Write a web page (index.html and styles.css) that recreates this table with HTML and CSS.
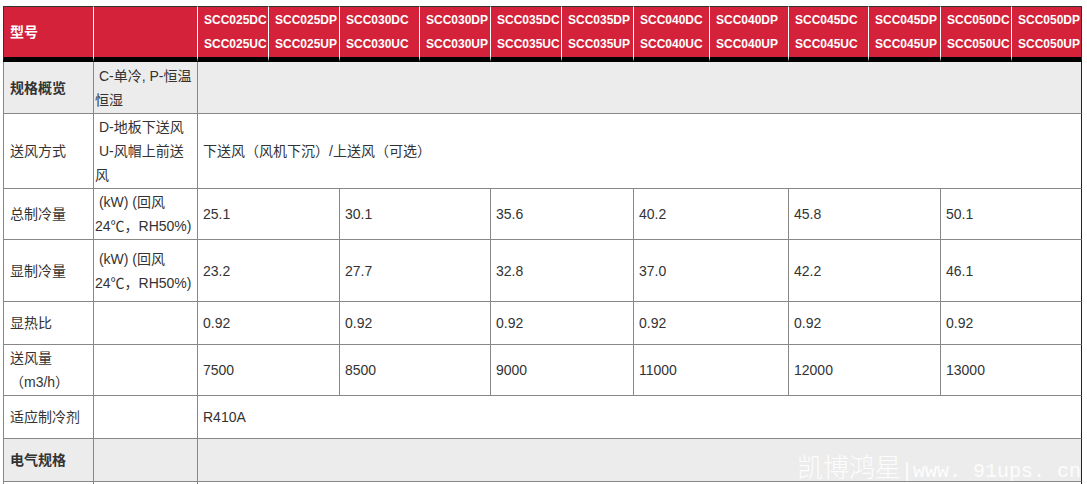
FILE: index.html
```html
<!DOCTYPE html>
<html lang="zh-CN">
<head>
<meta charset="utf-8">
<title>规格参数</title>
<link rel="stylesheet" href="styles.css">
</head>
<body>
<div class="page">
<table class="spec">
  <thead>
    <tr class="head">
      <th class="c1 title">型号</th>
      <th class="c2"></th>
      <th class="c3">SCC025DC<br>SCC025UC</th>
      <th class="c4">SCC025DP<br>SCC025UP</th>
      <th class="c5">SCC030DC<br>SCC030UC</th>
      <th class="c6">SCC030DP<br>SCC030UP</th>
      <th class="c7">SCC035DC<br>SCC035UC</th>
      <th class="c8">SCC035DP<br>SCC035UP</th>
      <th class="c9">SCC040DC<br>SCC040UC</th>
      <th class="c10">SCC040DP<br>SCC040UP</th>
      <th class="c11">SCC045DC<br>SCC045UC</th>
      <th class="c12">SCC045DP<br>SCC045UP</th>
      <th class="c13">SCC050DC<br>SCC050UC</th>
      <th class="c14">SCC050DP<br>SCC050UP</th>
    </tr>
  </thead>
  <tbody>
    <tr class="grey h52">
      <td class="lbl strong">规格概览</td>
      <td class="note">&nbsp;C-单冷, P-恒温恒湿</td>
      <td class="last" colspan="12"></td>
    </tr>
    <tr class="h75">
      <td class="lbl">送风方式</td>
      <td class="note">&nbsp;D-地板下送风 &nbsp;U-风帽上前送风</td>
      <td class="last" colspan="12">下送风（风机下沉）/上送风（可选）</td>
    </tr>
    <tr class="h51">
      <td class="lbl">总制冷量</td>
      <td class="note">&nbsp;(kW) (回风 24℃，RH50%)</td>
      <td colspan="2">25.1</td>
      <td colspan="2">30.1</td>
      <td colspan="2">35.6</td>
      <td colspan="2">40.2</td>
      <td colspan="2">45.8</td>
      <td class="last" colspan="2">50.1</td>
    </tr>
    <tr class="h62">
      <td class="lbl">显制冷量</td>
      <td class="note">&nbsp;(kW) (回风 24℃，RH50%)</td>
      <td colspan="2">23.2</td>
      <td colspan="2">27.7</td>
      <td colspan="2">32.8</td>
      <td colspan="2">37.0</td>
      <td colspan="2">42.2</td>
      <td class="last" colspan="2">46.1</td>
    </tr>
    <tr class="h43">
      <td class="lbl">显热比</td>
      <td class="note"></td>
      <td colspan="2">0.92</td>
      <td colspan="2">0.92</td>
      <td colspan="2">0.92</td>
      <td colspan="2">0.92</td>
      <td colspan="2">0.92</td>
      <td class="last" colspan="2">0.92</td>
    </tr>
    <tr class="h51">
      <td class="lbl">送风量（m3/h）</td>
      <td class="note"></td>
      <td colspan="2">7500</td>
      <td colspan="2">8500</td>
      <td colspan="2">9000</td>
      <td colspan="2">11000</td>
      <td colspan="2">12000</td>
      <td class="last" colspan="2">13000</td>
    </tr>
    <tr class="h43">
      <td class="lbl">适应制冷剂</td>
      <td class="note"></td>
      <td class="last" colspan="12">R410A</td>
    </tr>
    <tr class="grey h43">
      <td class="lbl strong">电气规格</td>
      <td class="note"></td>
      <td class="last" colspan="12"></td>
    </tr>
    <tr class="h43">
      <td class="lbl"></td>
      <td class="note"></td>
      <td class="last" colspan="12"></td>
    </tr>
  </tbody>
</table>
<div class="watermark"><span class="wm-cjk">凯博鸿星</span><span class="wm-lat">|www. 91ups. cn</span></div>
</div>
</body>
</html>
```

FILE: styles.css
```css
html {
  overflow: hidden;
}
body {
  margin: 0;
  padding: 6px 0 0 3px;
  background: #fff;
  font-family: "Liberation Sans", "Noto Sans CJK SC", sans-serif;
  font-size: 14px;
  color: #333;
}
.page {
  position: relative;
}
.spec {
  border-collapse: separate;
  border-spacing: 0;
  table-layout: fixed;
  width: 1079px;
}
.spec th,
.spec td {
  box-sizing: border-box;
  vertical-align: middle;
  text-align: left;
  line-height: 24px;
}
.spec th {
  background: #d3223a;
  color: #fff;
  font-family: "Liberation Sans", sans-serif;
  font-weight: bold;
  font-size: 12px;
  height: 56px;
  padding: 0 0 0 6px;
  border-top: 1px solid #333;
  border-right: 1px solid #fff;
  border-bottom: 5px solid #000;
  white-space: nowrap;
  overflow: hidden;
}
.spec th.title {
  font-family: "Liberation Sans", "Noto Sans CJK SC", sans-serif;
  font-size: 14px;
  border-left: 1px solid #333;
}
.spec th.c14 { border-right-color: #333; }

.c1 { width: 91px; }
.c2 { width: 104px; }
.c3 { width: 71px; }
.c4 { width: 71px; }
.c5 { width: 80px; }
.c6 { width: 71px; }
.c7 { width: 71px; }
.c8 { width: 72px; }
.c9 { width: 76px; }
.c10 { width: 79px; }
.c11 { width: 80px; }
.c12 { width: 72px; }
.c13 { width: 71px; }
.c14 { width: 70px; }

.spec td {
  padding: 0 4px 0 5px;
  border-right: 1px solid #888;
  border-bottom: 1px solid #888;
}
.spec td.lbl {
  border-left: 1px solid #888;
  padding-left: 6px;
}
.spec td.note {
  padding: 0 2px 0 1px;
}
.spec td.last {
  border-right-color: #222;
}
.grey td {
  background: #ececec;
}
.strong {
  font-weight: bold;
}
.h52 { height: 52px; }
.h75 { height: 75px; }
.h51 { height: 51px; }
.h62 { height: 62px; }
.h43 { height: 43px; }

.watermark {
  position: absolute;
  left: 794px;
  top: 439px;
  color: rgba(255, 255, 255, 0.9);
  white-space: nowrap;
  line-height: 42px;
}
.wm-cjk {
  font-family: "Noto Sans CJK SC", sans-serif;
  font-weight: 300;
  font-size: 26px;
}
.wm-lat {
  font-family: "Liberation Mono", monospace;
  font-size: 20px;
}
```
